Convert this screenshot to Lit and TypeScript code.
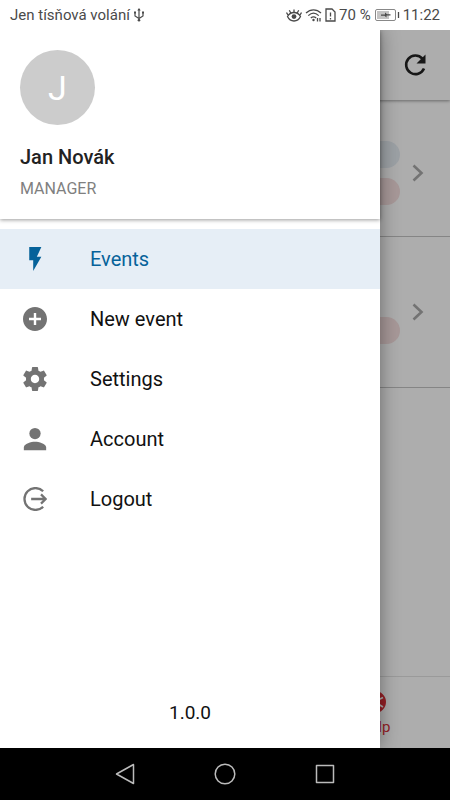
import { LitElement, html, css, svg, TemplateResult } from "lit";
import { customElement, property, state } from "lit/decorators.js";
import { classMap } from "lit/directives/class-map.js";

interface MenuItem {
  id: string;
  label: string;
  icon: TemplateResult;
}

interface EventRow {
  tall: boolean;
  chips: string[];
}

const MENU: MenuItem[] = [
  { id: "events", label: "Events", icon: svg`<path d="M7.200 2v11h3.300v9l6.800-11.800h-3.800l3.800-8.200z"/>` },
  {
    id: "new",
    label: "New event",
    icon: svg`<path d="M12 2C6.480 2 2 6.480 2 12s4.480 10 10 10 10-4.480 10-10S17.520 2 12 2zm5 11h-4v4h-2v-4H7v-2h4V7h2v4h4v2z"/>`,
  },
  {
    id: "settings",
    label: "Settings",
    icon: svg`<path d="M19.430 12.980c.04-.32.07-.64.07-.98s-.03-.66-.07-.98l2.110-1.650c.19-.15.24-.42.12-.64l-2-3.460c-.12-.22-.39-.3-.61-.22l-2.490 1c-.52-.4-1.080-.73-1.690-.98l-.38-2.650C14.460 2.180 14.250 2 14 2h-4c-.25 0-.46.180-.49.420l-.38 2.650c-.61.250-1.170.590-1.690.980l-2.490-1c-.23-.09-.49 0-.61.220l-2 3.460c-.13.220-.07.490.12.640l2.110 1.650c-.04.320-.07.650-.07.980s.03.660.07.980l-2.110 1.650c-.19.150-.24.420-.12.640l2 3.460c.12.220.39.300.61.220l2.490-1c.52.400 1.080.730 1.690.980l.38 2.650c.03.240.24.420.49.420h4c.25 0 .46-.18.49-.42l.38-2.650c.61-.25 1.170-.59 1.690-.98l2.490 1c.23.090.49 0 .61-.22l2-3.460c.12-.22.07-.49-.12-.64l-2.110-1.650zM12 15.500c-1.930 0-3.500-1.570-3.500-3.500s1.570-3.500 3.500-3.500 3.500 1.570 3.500 3.500-1.570 3.500-3.500 3.500z"/>`,
  },
  {
    id: "account",
    label: "Account",
    icon: svg`<circle cx="12" cy="7.500" r="4.700"/><path d="M2.700 21.300v-2.300c0-3.100 6.200-4.700 9.300-4.700s9.300 1.600 9.300 4.700v2.300z"/>`,
  },
  {
    id: "logout",
    label: "Logout",
    icon: svg`<g fill="none" stroke="currentColor" stroke-width="1.900"><path d="M18.800 5.600A9.100 9.100 0 1 0 18.800 18.400"/><path d="M8.800 12h12M17 8.200l3.900 3.800-3.900 3.800"/></g>`,
  },
];

const EVENTS: EventRow[] = [
  { tall: false, chips: ["blue", "red"] },
  { tall: true, chips: ["red"] },
];

@customElement("status-bar")
class StatusBar extends LitElement {
  static styles = css`
    :host {
      display: flex;
      align-items: center;
      justify-content: space-between;
      height: 30px;
      padding: 0 10px;
      background: #fff;
      color: #4a4a4a;
      font-size: 15px;
      line-height: 20px;
    }
    .group {
      display: flex;
      align-items: center;
      gap: 3px;
    }
    svg {
      display: block;
      fill: none;
      stroke: currentColor;
    }
  `;
  render() {
    return html`
      <div class="group">
        <span>Jen tísňová volání</span>
        <svg width="12" height="16" viewBox="0 0 12 16" stroke-width="1.200">
          <path d="M6 2v11M2 5.500v3.500l4 2.500 4-2.500v-3.500" />
          <path d="M4.300 3.500 6 1l1.700 2.500z" fill="currentColor" stroke="none" />
          <circle cx="6" cy="13.300" r="1.300" fill="currentColor" stroke="none" />
          <path d="M1 4.500h2v2H1zM9 4.500h2v2H9z" fill="currentColor" stroke="none" />
        </svg>
      </div>
      <div class="group">
        <svg width="16" height="16" viewBox="0 0 16 16" stroke-width="1.300">
          <path d="M1.500 9.500C3 6.800 5.500 5.500 8 5.500s5 1.300 6.500 4C13 12.700 10.500 14 8 14s-5-1.300-6.500-4.500z" />
          <circle cx="8" cy="9.600" r="2.400" fill="currentColor" stroke="none" />
          <path d="M8 5.500V2.500M4.800 6 3.300 3.300M11.200 6l1.500-2.700M2 8 .5 5.500M14 8l1.500-2.500" />
        </svg>
        <svg width="17" height="16" viewBox="0 0 17 16" stroke-width="1.300">
          <path d="M1 6c4.500-4.300 10.500-4.300 15 0M3.300 8.600c3.200-3 7.200-3 10.400 0M5.800 11c1.700-1.500 3.700-1.500 5.400 0" />
          <circle cx="8.500" cy="13" r="1.200" fill="currentColor" stroke="none" />
          <path d="M12.500 11v3.500M15 11v3.500" />
        </svg>
        <svg width="11" height="16" viewBox="0 0 11 16" stroke-width="1.300">
          <path d="M1 2h6l3 3v9H1zM5.500 5.500v4M5.500 11v1.500" />
        </svg>
        <span>70 %</span>
        <svg width="26" height="16" viewBox="0 0 26 16">
          <rect x="1.500" y="2.500" width="20" height="11" rx="1.500" stroke="#888" />
          <path d="M3 4h12v8H3z" fill="#c4c4c4" stroke="none" />
          <path d="M7 7.500h4V5.500l2 1.700h3.500V8.500h-4V10.500L10.500 8.800H7z" fill="currentColor" stroke="none" />
          <path d="M24.500 5v6" stroke-width="1.300" />
        </svg>
        <span>11:22</span>
      </div>
    `;
  }
}

@customElement("events-page")
class EventsPage extends LitElement {
  static styles = css`
    :host {
      display: flex;
      flex-direction: column;
      background: #fff;
    }
    header {
      display: flex;
      align-items: center;
      justify-content: flex-end;
      height: 70px;
      padding-right: 20px;
      box-sizing: border-box;
      box-shadow: 0 1px 3px rgba(0, 0, 0, 0.4);
    }
    button {
      display: block;
      padding: 0;
      border: 0;
      background: none;
      color: #222;
    }
    svg {
      display: block;
    }
    .list {
      flex: 1;
      margin: 0;
      padding: 0;
      list-style: none;
    }
    .row {
      display: flex;
      align-items: center;
      justify-content: flex-end;
      gap: 12px;
      box-sizing: border-box;
      height: 137px;
      padding: 10px 26px 0 0;
      border-bottom: 1px solid #c4c4c4;
    }
    .tall {
      height: 151px;
      padding-top: 0;
    }
    .chips {
      display: flex;
      flex-direction: column;
      gap: 10px;
    }
    .tall .chips {
      padding-top: 37px;
    }
    .chip {
      width: 80px;
      height: 27px;
      border-radius: 14px;
    }
    .blue {
      background: #e6edf4;
    }
    .red {
      background: #f6e0e0;
    }
    .chevron {
      color: #aaa;
    }
    .tabs {
      display: grid;
      grid-template-columns: repeat(3, 1fr);
      height: 72px;
      box-sizing: border-box;
      border-top: 1px solid #e4e4e4;
    }
    .help {
      grid-column: 3;
      display: flex;
      flex-direction: column;
      align-items: center;
      gap: 4px;
      padding-top: 14px;
      color: #dc3038;
      font-size: 15px;
      line-height: 20px;
      text-decoration: none;
    }
  `;
  render() {
    return html`
      <header>
        <button aria-label="Refresh">
          <svg width="30" height="30" viewBox="0 0 30 30" fill="none" stroke="currentColor" stroke-width="2.600">
            <path d="M22.300 8.500A9.300 9.300 0 1 0 24 18.500" />
            <path d="M25.500 4.500v9h-9z" fill="currentColor" stroke="none" />
          </svg>
        </button>
      </header>
      <ul class="list">
        ${EVENTS.map(
          (e) => html`<li class=${classMap({ row: true, tall: e.tall })}>
            <div class="chips">${e.chips.map((c) => html`<div class="chip ${c}"></div>`)}</div>
            <svg class="chevron" width="12" height="18" viewBox="0 0 12 18" fill="none" stroke="currentColor" stroke-width="2.600">
              <path d="M1.500 1.500 9.500 9l-8 7.500" />
            </svg>
          </li>`
        )}
      </ul>
      <nav class="tabs">
        <a class="help" href="#help">
          <svg width="22" height="22" viewBox="0 0 22 22" fill="none" stroke="currentColor">
            <circle cx="11" cy="11" r="7.500" stroke-width="7" />
            <path d="M15 8.500 19 6.500M15 13.500l4 2.500M7 8.500 3 6.500M7 13.500 3 16" stroke="#fff" stroke-width="1.700" />
          </svg>
          Help
        </a>
      </nav>
    `;
  }
}

@customElement("side-drawer")
class SideDrawer extends LitElement {
  @property({ type: String }) selected = "events";

  static styles = css`
    :host {
      display: flex;
      flex-direction: column;
      background: #fff;
      box-shadow: 0 0 18px rgba(0, 0, 0, 0.4);
    }
    header {
      padding: 20px 20px 0;
      height: 189px;
      box-sizing: border-box;
      box-shadow: 0 1px 4px rgba(0, 0, 0, 0.4);
    }
    .avatar {
      display: flex;
      align-items: center;
      justify-content: center;
      width: 75px;
      height: 75px;
      border-radius: 50%;
      background: #ccc;
      color: #fff;
      font-size: 34px;
    }
    .name {
      margin: 20px 0 0;
      color: #222;
      font-size: 20px;
      font-weight: 500;
      line-height: 24px;
    }
    .role {
      margin: 10px 0 0;
      color: #808080;
      font-size: 16px;
      line-height: 20px;
    }
    nav {
      flex: 1;
      padding-top: 10px;
    }
    a {
      display: flex;
      align-items: center;
      gap: 43px;
      height: 60px;
      padding-left: 23px;
      color: #111;
      font-size: 20px;
      text-decoration: none;
    }
    svg {
      display: block;
      fill: currentColor;
      color: #737373;
    }
    .active {
      background: #e6eef6;
    }
    .active,
    .active svg {
      color: #06629a;
    }
    .version {
      margin: 0;
      padding: 0 0 23px;
      color: #111;
      font-size: 19px;
      line-height: 24px;
      text-align: center;
    }
  `;
  private pick(e: Event, id: string) {
    e.preventDefault();
    this.dispatchEvent(new CustomEvent("pick", { detail: id }));
  }
  render() {
    return html`
      <header>
        <div class="avatar">J</div>
        <h1 class="name">Jan Novák</h1>
        <p class="role">MANAGER</p>
      </header>
      <nav>
        ${MENU.map(
          (m) => html`<a
            href="#${m.id}"
            class=${classMap({ active: m.id === this.selected })}
            @click=${(e: Event) => this.pick(e, m.id)}
          >
            <svg width="24" height="24" viewBox="2 2 20 20">${m.icon}</svg>
            <span>${m.label}</span>
          </a>`
        )}
      </nav>
      <p class="version">1.0.0</p>
    `;
  }
}

@customElement("system-nav")
class SystemNav extends LitElement {
  static styles = css`
    :host {
      display: flex;
      align-items: center;
      justify-content: center;
      gap: 76px;
      height: 52px;
      background: #000;
    }
    button {
      display: block;
      padding: 0;
      border: 0;
      background: none;
      color: #bbb;
    }
    svg {
      display: block;
      fill: none;
      stroke: currentColor;
      stroke-width: 1.500;
      stroke-linejoin: round;
    }
  `;
  render() {
    return html`
      <button aria-label="Back">
        <svg width="24" height="24" viewBox="0 0 24 24"><path d="M20.500 2.500v19L3.500 12z" /></svg>
      </button>
      <button aria-label="Home">
        <svg width="24" height="24" viewBox="0 0 24 24"><circle cx="12" cy="12" r="9.800" /></svg>
      </button>
      <button aria-label="Recent apps">
        <svg width="24" height="24" viewBox="0 0 24 24"><rect x="3.500" y="3.500" width="17" height="17" /></svg>
      </button>
    `;
  }
}

@customElement("app-root")
class AppRoot extends LitElement {
  @state() private selected = "events";

  static styles = css`
    :host {
      display: flex;
      flex-direction: column;
      min-height: 100vh;
      font-family: Roboto, "Noto Sans", sans-serif;
    }
    .stage {
      flex: 1;
      display: grid;
      grid-template-columns: minmax(0, 1fr) 70px;
      overflow: hidden;
    }
    .page {
      grid-area: 1 / 1 / 2 / 3;
    }
    .scrim {
      grid-area: 1 / 1 / 2 / 3;
      z-index: 1;
      background: rgba(0, 0, 0, 0.32);
    }
    .drawer {
      grid-area: 1 / 1 / 2 / 2;
      z-index: 2;
    }
  `;
  render() {
    return html`
      <status-bar></status-bar>
      <div class="stage">
        <events-page class="page"></events-page>
        <div class="scrim"></div>
        <side-drawer
          class="drawer"
          .selected=${this.selected}
          @pick=${(e: CustomEvent<string>) => (this.selected = e.detail)}
        ></side-drawer>
      </div>
      <system-nav></system-nav>
    `;
  }
}
